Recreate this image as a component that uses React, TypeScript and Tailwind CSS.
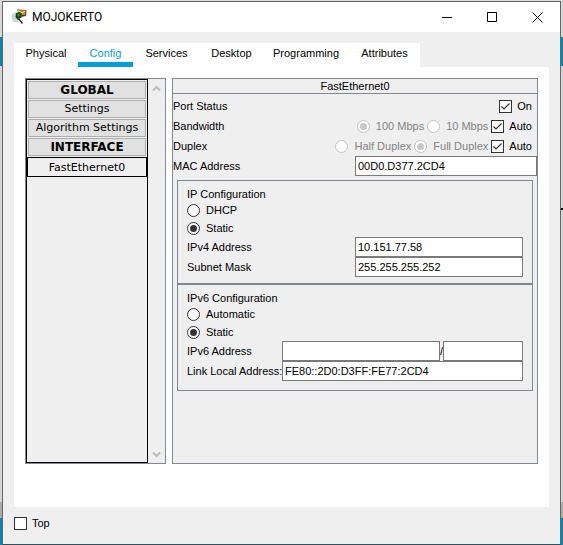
import { useState } from "react";
import type { ReactNode } from "react";

const TABS = ["Physical", "Config", "Services", "Desktop", "Programming", "Attributes"];

function DeviceIcon() {
  return (
    <svg viewBox="0 0 16 16" className="size-4" aria-hidden="true">
      <path d="M5 3.500C2 3.500.5 5.500.5 8s2 4 5 4l2-2z" fill="#cfd6d2" />
      <path d="M1.500 11.500c2 1.500 4 1.500 6 .5" fill="none" stroke="#c4c4c4" />
      <path d="M6 .5l9.500.5-.5 6-5 1z" fill="#5a3812" />
      <path d="M6.500 1l8 .5-.5 4.500-6-.5z" fill="#c39238" />
      <path d="m7 1.500 4 2.500 3.500-2" fill="none" stroke="#f2dc96" />
      <path d="M5 4l4-1 1.500 2L10 9l-4 1-1.500-2z" fill="#0d4a1b" />
      <path d="M6 5.500l2-1 1 1.500-1.500 2z" fill="#2b9a40" />
      <path d="M10 4v4.500" stroke="#7b3a10" />
      <path d="M6.500 10.500 9 10M8.500 11l3 3.500" stroke="#333" strokeWidth="1.500" />
    </svg>
  );
}

function WindowButton({ label, children }: { label: string; children: ReactNode }) {
  return (
    <button type="button" aria-label={label} className="flex w-[45px] items-center justify-center">
      <svg viewBox="0 0 11 11" className="size-[11px]" fill="none" stroke="#000">
        {children}
      </svg>
    </button>
  );
}

function Check({ label, defaultChecked = false }: { label: string; defaultChecked?: boolean }) {
  return (
    <label className="flex items-center gap-[5px]">
      <span className="grid size-[13px]">
        <input
          type="checkbox"
          defaultChecked={defaultChecked}
          className="peer col-start-1 row-start-1 size-[13px] appearance-none border border-[#333] bg-white"
        />
        <svg
          viewBox="0 0 13 13"
          className="pointer-events-none invisible col-start-1 row-start-1 size-[13px] peer-checked:visible"
          fill="none"
          stroke="#333"
          strokeWidth="1.200"
        >
          <path d="M2.500 6.500 5 9l5.500-5.500" />
        </svg>
      </span>
      {label}
    </label>
  );
}

type RadioProps = { name: string; label: string; defaultChecked?: boolean; disabled?: boolean };

function Radio({ name, label, defaultChecked = false, disabled = false }: RadioProps) {
  return (
    <label className={disabled ? "flex items-center gap-1.5 text-[#838383]" : "flex h-[18px] items-center gap-1.5"}>
      <span className="grid size-[13px]">
        <input
          type="radio"
          name={name}
          defaultChecked={defaultChecked}
          disabled={disabled}
          className="peer col-start-1 row-start-1 size-[13px] appearance-none rounded-full border border-[#333] bg-white disabled:border-[#c3c3c3]"
        />
        <span className="pointer-events-none invisible col-start-1 row-start-1 size-[7px] place-self-center rounded-full bg-[#333] peer-checked:visible peer-disabled:bg-[#c8c8c8]" />
      </span>
      {label}
    </label>
  );
}

const FIELD = "h-5 border border-[#7a7a7a] bg-white px-0.5 outline-none";

function Field({ id, label, value }: { id: string; label: string; value: string }) {
  return (
    <div className="flex h-5 items-center justify-between">
      <label htmlFor={id}>{label}</label>
      <input id={id} defaultValue={value} className={`${FIELD} w-[168px]`} />
    </div>
  );
}

function SideButton({ label, heading = false }: { label: string; heading?: boolean }) {
  return (
    <button
      type="button"
      className={
        heading
          ? "h-[18px] border border-[#adadad] bg-[#e1e1e1] text-xs font-bold"
          : "h-[18px] border border-[#adadad] bg-[#e1e1e1]"
      }
    >
      {label}
    </button>
  );
}

function ScrollArrow({ label, d }: { label: string; d: string }) {
  return (
    <button type="button" aria-label={label} className="flex h-[18px] items-center justify-center">
      <svg viewBox="0 0 9 7" className="h-[7px] w-[9px]" fill="none" stroke="#bcbcbc" strokeWidth="2">
        <path d={d} />
      </svg>
    </button>
  );
}

export default function App() {
  const [tab, setTab] = useState("Config");

  return (
    <div className="relative flex min-h-screen flex-col bg-[linear-gradient(#d9d9d9_0_37px,#0588b6_37px_66px,#d5d5d5_66px_502px,#ababab_502px_518px,#0588b6_518px)] px-0.5 pt-px font-['Liberation_Sans',Arial,sans-serif] text-[11px] leading-[14px] text-black">
      <div className="absolute right-0 top-[208px] h-0.5 w-0.5 bg-black" />
      <main className="flex flex-1 flex-col border border-[#666] border-b-[#245465] bg-[#efefef]">
        <header className="flex h-[30px] bg-white">
          <div className="flex flex-1 items-center gap-[5px] pl-2">
            <DeviceIcon />
            <h1 className="font-[Roboto,'Open_Sans',sans-serif] text-xs">MOJOKERTO</h1>
          </div>
          <WindowButton label="Minimize">
            <path d="M0 5.500h10" />
          </WindowButton>
          <WindowButton label="Maximize">
            <path d="M.5 .5h9v9h-9z" />
          </WindowButton>
          <WindowButton label="Close">
            <path d="m.5 .5 10 10m0-10-10 10" />
          </WindowButton>
        </header>

        <div className="flex flex-1 flex-col px-[11px] pt-[11px]">
          <nav className="grid h-6 grid-cols-[64px_55px_67px_63px_86px_71px] self-start bg-white" role="tablist">
            {TABS.map((name) => (
              <button
                key={name}
                type="button"
                role="tab"
                aria-selected={tab === name}
                onClick={() => setTab(name)}
                className={
                  tab === name
                    ? "border-b-[5px] border-[#049fd9] pt-px text-[#049fd9]"
                    : "border-b-[5px] border-transparent pt-px"
                }
              >
                {name}
              </button>
            ))}
          </nav>

          <div className="flex flex-1 gap-1.5 bg-white px-[11px] pb-[43px] pt-[11px]">
            <aside className="flex w-[141px] border border-[#838791] bg-[#efefef] font-['DejaVu_Sans',Verdana,sans-serif]">
              <div className="flex w-[122px] flex-col border border-black">
                <div className="flex flex-col gap-px p-px">
                  <SideButton label="GLOBAL" heading />
                  <SideButton label="Settings" />
                  <SideButton label="Algorithm Settings" />
                  <SideButton label="INTERFACE" heading />
                </div>
                <button type="button" className="h-5 border border-black pt-0.5">
                  FastEthernet0
                </button>
              </div>
              <div className="flex flex-1 flex-col justify-between">
                <ScrollArrow label="Scroll up" d="M1 5.500 4.500 2 8 5.500" />
                <ScrollArrow label="Scroll down" d="M1 1.500 4.500 5 8 1.500" />
              </div>
            </aside>

            <section className="flex-1 border border-[#838791] bg-[#efefef]">
              <h2 className="h-[15px] border-b border-[#838791] text-center">FastEthernet0</h2>
              <div className="pt-0.5">
                <div className="flex h-5 items-center justify-between pr-[5px]">
                  <span>Port Status</span>
                  <Check label="On" defaultChecked />
                </div>
                <div className="flex h-5 items-center pr-[5px]">
                  <span className="flex-1">Bandwidth</span>
                  <div className="flex gap-[3px]">
                    <Radio name="bandwidth" label="100 Mbps" defaultChecked disabled />
                    <Radio name="bandwidth" label="10 Mbps" disabled />
                    <Check label="Auto" defaultChecked />
                  </div>
                </div>
                <div className="flex h-5 items-center pr-[5px]">
                  <span className="flex-1">Duplex</span>
                  <div className="flex gap-[3px]">
                    <Radio name="duplex" label="Half Duplex" disabled />
                    <Radio name="duplex" label="Full Duplex" defaultChecked disabled />
                    <Check label="Auto" defaultChecked />
                  </div>
                </div>
                <div className="flex h-5 items-center justify-between">
                  <label htmlFor="mac">MAC Address</label>
                  <input id="mac" defaultValue="00D0.D377.2CD4" className={`${FIELD} w-[182px]`} />
                </div>
              </div>

              <div className="mx-1 mt-1">
                <div role="group" aria-labelledby="ip4" className="border border-[#838791] px-[9px] py-1.5">
                  <h3 id="ip4">IP Configuration</h3>
                  <Radio name="ipv4" label="DHCP" />
                  <Radio name="ipv4" label="Static" defaultChecked />
                  <Field id="ipv4-address" label="IPv4 Address" value="10.151.77.58" />
                  <Field id="subnet" label="Subnet Mask" value="255.255.255.252" />
                </div>
                <div role="group" aria-labelledby="ip6" className="border border-[#838791] px-[9px] pb-[9px] pt-1.5">
                  <h3 id="ip6">IPv6 Configuration</h3>
                  <Radio name="ipv6" label="Automatic" />
                  <Radio name="ipv6" label="Static" defaultChecked />
                  <div className="grid grid-cols-[95px_1fr] items-center">
                    <label htmlFor="ipv6-address">IPv6 Address</label>
                    <div className="flex items-center">
                      <input id="ipv6-address" className={`${FIELD} w-0 flex-1`} />
                      <span>/</span>
                      <input aria-label="Prefix length" className={`${FIELD} w-20`} />
                    </div>
                    <label htmlFor="link-local" className="whitespace-nowrap">
                      Link Local Address:
                    </label>
                    <input id="link-local" defaultValue="FE80::2D0:D3FF:FE77:2CD4" className={`${FIELD} w-full`} />
                  </div>
                </div>
              </div>
            </section>
          </div>

          <footer className="flex h-[37px] items-center pb-[5px]">
            <Check label="Top" />
          </footer>
        </div>
      </main>
    </div>
  );
}
